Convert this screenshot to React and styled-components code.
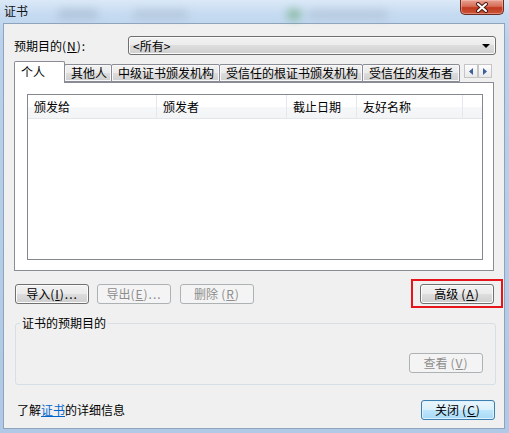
import React from "react";
import styled, { createGlobalStyle } from "styled-components";

const GlobalStyle = createGlobalStyle`
  html, body {
    margin: 0;
    padding: 0;
    background: #b9d1ea;
  }
  body {
    font-family: "Noto Sans CJK SC", "Liberation Sans", sans-serif;
    font-size: 12px;
    color: #000;
  }
`;

const Frame = styled.div`
  width: 509px;
  height: 433px;
  box-sizing: border-box;
  padding: 0 4px 4px 3px;
  display: flex;
  flex-direction: column;
  background: linear-gradient(#dbe9f7, #c6dbf1 14px, #b9d1ea 40px, #afc9e6);
  overflow: hidden;
`;

const TitleBar = styled.div`
  height: 23px;
  display: flex;
  align-items: flex-start;
  position: relative;
`;

const Blob = styled.span`
  position: absolute;
  top: ${(p) => p.$top}px;
  left: ${(p) => p.$left}px;
  width: ${(p) => p.$w}px;
  height: ${(p) => p.$h}px;
  background: ${(p) => p.$color};
  filter: blur(4px);
  opacity: 0.55;
  border-radius: 4px;
`;

const Title = styled.div`
  position: relative;
  margin: 4px 0 0 1px;
  line-height: 14px;
  font-size: 12px;
  color: #111;
`;

const CloseButton = styled.div`
  position: relative;
  margin-left: auto;
  margin-right: 1px;
  width: 44px;
  height: 15px;
  box-sizing: border-box;
  border: 1px solid #6b2b22;
  border-top: none;
  border-radius: 0 0 5px 5px;
  background: linear-gradient(#e6a293, #d66d57 45%, #c13a1f 55%, #c9553a);
  box-shadow: inset 0 0 0 1px rgba(255, 200, 190, 0.45);
  display: flex;
  align-items: center;
  justify-content: center;
`;

const Client = styled.div`
  flex: 1;
  background: #f0f0f0;
  border: 1px solid #8ea4bd;
  display: flex;
  flex-direction: column;
`;

const PurposeRow = styled.div`
  margin-top: 12px;
  height: 19px;
  display: flex;
  align-items: center;
  padding: 0 8px 0 10px;
`;

const Label = styled.span`
  width: 114px;
  line-height: 14px;
`;

const Mnemonic = styled.span`
  letter-spacing: 1px;
  margin-left: ${(p) => (p.$gap ? 3 : 0)}px;

  u {
    text-decoration: underline;
  }
`;

const Combo = styled.div`
  flex: 1;
  height: 19px;
  box-sizing: border-box;
  border: 1px solid #707070;
  border-radius: 3px;
  background: linear-gradient(#f2f2f2, #ebebeb 50%, #dddddd 50%, #cfcfcf);
  box-shadow: inset 0 0 0 1px #fbfbfb;
  display: flex;
  align-items: center;
  padding: 0 5px 0 4px;
  line-height: 14px;
`;

const ComboArrow = styled.span`
  margin-left: auto;
  width: 0;
  height: 0;
  border-left: 4px solid transparent;
  border-right: 4px solid transparent;
  border-top: 4px solid #000;
`;

const TabStrip = styled.div`
  margin: 6px 10px 0;
  height: 21px;
  display: flex;
  align-items: flex-end;
  position: relative;
  z-index: 1;
`;

const Tab = styled.div`
  width: ${(p) => p.$w}px;
  height: ${(p) => (p.$active ? 22 : 18)}px;
  margin-bottom: ${(p) => (p.$active ? -1 : 0)}px;
  margin-left: ${(p) => (p.$first ? 0 : -1)}px;
  position: relative;
  z-index: ${(p) => (p.$active ? 2 : 1)};
  box-sizing: border-box;
  border: 1px solid #898c95;
  border-bottom: ${(p) => (p.$active ? "none" : "1px solid #898c95")};
  border-radius: 2px 2px 0 0;
  background: ${(p) =>
    p.$active ? "#fff" : "linear-gradient(#f2f2f2, #ebebeb 50%, #dddddd 50%, #cfcfcf)"};
  box-shadow: ${(p) => (p.$active ? "none" : "inset 0 0 0 1px #f8f8f8")};
  display: flex;
  align-items: ${(p) => (p.$active ? "flex-start" : "center")};
  padding: ${(p) => (p.$active ? "3px 0 0 6px" : "0 0 0 6px")};
  line-height: 14px;
  white-space: nowrap;
  overflow: hidden;
`;

const ScrollArrows = styled.div`
  align-self: flex-start;
  margin: 3px 2px 0 auto;
  display: flex;
`;

const ArrowButton = styled.div`
  width: 14px;
  height: 14px;
  box-sizing: border-box;
  border: 1px solid #c5c5c5;
  background: linear-gradient(#fdfdfd, #e9e9e9);
  display: flex;
  align-items: center;
  justify-content: center;
`;

const Panel = styled.div`
  height: 189px;
  box-sizing: border-box;
  margin: 0 10px;
  border: 1px solid #898c95;
  background: #fff;
  padding: 11px 10px 10px 12px;
  display: flex;
`;

const List = styled.div`
  flex: 1;
  border: 1px solid #828790;
  background: #fff;
`;

const Header = styled.div`
  height: 23px;
  display: flex;
  background: linear-gradient(#ffffff, #ffffff 50%, #f5f7f9 50%, #f3f4f6);
  border-bottom: 1px solid #e3e6ea;
`;

const HeaderCell = styled.div`
  width: ${(p) => (p.$w ? `${p.$w}px` : "auto")};
  flex: ${(p) => (p.$w ? "none" : 1)};
  box-sizing: border-box;
  padding-left: 6px;
  border-right: ${(p) => (p.$last ? "none" : "1px solid #e4e7eb")};
  display: flex;
  align-items: center;
  line-height: 14px;
`;

const ButtonRow = styled.div`
  margin-top: 13px;
  display: flex;
  padding: 0 10px 0 11px;
`;

const Button = styled.div`
  width: 74px;
  height: 20px;
  box-sizing: border-box;
  border: 1px solid ${(p) => (p.$disabled ? "#adb2b5" : p.$primary ? "#3c7fb1" : "#707070")};
  border-radius: 3px;
  background: ${(p) =>
    p.$disabled
      ? "#f4f4f4"
      : p.$primary
      ? "linear-gradient(#eaf6fd, #d9f0fc 50%, #bee6fd 50%, #a7d9f5)"
      : "linear-gradient(#f2f2f2, #ebebeb 50%, #dddddd 50%, #cfcfcf)"};
  box-shadow: inset 0 0 0 1px ${(p) => (p.$disabled ? "#f4f4f4" : p.$primary ? "#dff2fc" : "#fbfbfb")};
  color: ${(p) => (p.$disabled ? "#8d8d8d" : "#000")};
  display: flex;
  align-items: center;
  justify-content: center;
  line-height: 14px;
  margin-left: ${(p) => p.$ml || 0}px;
  white-space: nowrap;
`;

const Highlight = styled.div`
  margin-left: auto;
  position: relative;

  &::after {
    content: "";
    position: absolute;
    top: -5px;
    bottom: -4px;
    left: -9px;
    right: -9px;
    border: 2px solid #e8141c;
  }
`;

const Group = styled.fieldset`
  margin: 12px 8px 0 11px;
  padding: 0;
  border: 1px solid #d5dfe5;
  border-radius: 3px;
  min-width: 0;
`;

const GroupLegend = styled.legend`
  margin-left: 4px;
  padding: 0 2px;
  line-height: 14px;
`;

const GroupBody = styled.div`
  display: flex;
  justify-content: flex-end;
  padding: 23px 12px 11px 0;
`;

const Footer = styled.div`
  margin-top: 15px;
  display: flex;
  align-items: center;
  padding: 0 9px 0 13px;
`;

const InfoText = styled.span`
  line-height: 14px;
`;

const Link = styled.a`
  color: #0066cc;
  text-decoration: underline;
`;

const Spacer = styled.div`
  flex: 1;
`;

const tabs = [
  { label: "个人", w: 51, active: true },
  { label: "其他人", w: 48 },
  { label: "中级证书颁发机构", w: 109 },
  { label: "受信任的根证书颁发机构", w: 144 },
  { label: "受信任的发布者", w: 98 },
];

const columns = [
  { label: "颁发给", w: 129 },
  { label: "颁发者", w: 130 },
  { label: "截止日期", w: 70 },
  { label: "友好名称", w: 106 },
  { label: "", last: true },
];

const Key = ({ k, dots, gap }) => (
  <Mnemonic $gap={gap}>
    (<u>{k}</u>){dots ? "..." : ""}
  </Mnemonic>
);

const App = () => {
  return (
    <>
      <GlobalStyle />
      <Frame>
        <TitleBar>
          <Blob $top={9} $left={55} $w={40} $h={10} $color="#9fb2c8" />
          <Blob $top={10} $left={130} $w={55} $h={9} $color="#a7b8cc" />
          <Blob $top={9} $left={284} $w={14} $h={11} $color="#5fa36b" />
          <Blob $top={10} $left={305} $w={80} $h={9} $color="#a9b9cc" />
          <Title>证书</Title>
          <CloseButton>
            <svg width="14" height="11" viewBox="0 0 14 11">
              <path d="M3 2 L11 9 M11 2 L3 9" stroke="#4a1a14" strokeWidth="4" strokeLinecap="round" />
              <path d="M3 2 L11 9 M11 2 L3 9" stroke="#fff" strokeWidth="2" strokeLinecap="round" />
            </svg>
          </CloseButton>
        </TitleBar>
        <Client>
          <PurposeRow>
            <Label>
              预期目的<Key k="N" />:
            </Label>
            <Combo>
              &lt;所有&gt;
              <ComboArrow />
            </Combo>
          </PurposeRow>
          <TabStrip>
            {tabs.map((t, i) => (
              <Tab key={t.label} $w={t.w} $active={t.active} $first={i === 0}>
                {t.label}
              </Tab>
            ))}
            <ScrollArrows>
              <ArrowButton>
                <svg width="4" height="7" viewBox="0 0 4 7">
                  <path d="M4 0 L0 3.5 L4 7 Z" fill="#3b5f99" />
                </svg>
              </ArrowButton>
              <ArrowButton>
                <svg width="4" height="7" viewBox="0 0 4 7">
                  <path d="M0 0 L4 3.5 L0 7 Z" fill="#3b5f99" />
                </svg>
              </ArrowButton>
            </ScrollArrows>
          </TabStrip>
          <Panel>
            <List>
              <Header>
                {columns.map((c, i) => (
                  <HeaderCell key={i} $w={c.w} $last={c.last}>
                    {c.label}
                  </HeaderCell>
                ))}
              </Header>
            </List>
          </Panel>
          <ButtonRow>
            <Button>
              导入<Key k="I" dots />
            </Button>
            <Button $disabled $ml={8}>
              导出<Key k="E" dots />
            </Button>
            <Button $disabled $ml={9}>
              删除<Key k="R" gap />
            </Button>
            <Highlight>
              <Button>
                高级<Key k="A" gap />
              </Button>
            </Highlight>
          </ButtonRow>
          <Group>
            <GroupLegend>证书的预期目的</GroupLegend>
            <GroupBody>
              <Button $disabled>
                查看<Key k="V" gap />
              </Button>
            </GroupBody>
          </Group>
          <Footer>
            <InfoText>
              了解<Link href="#">证书</Link>的详细信息
            </InfoText>
            <Spacer />
            <Button $primary>
              关闭<Key k="C" gap />
            </Button>
          </Footer>
        </Client>
      </Frame>
    </>
  );
};

export default App;
